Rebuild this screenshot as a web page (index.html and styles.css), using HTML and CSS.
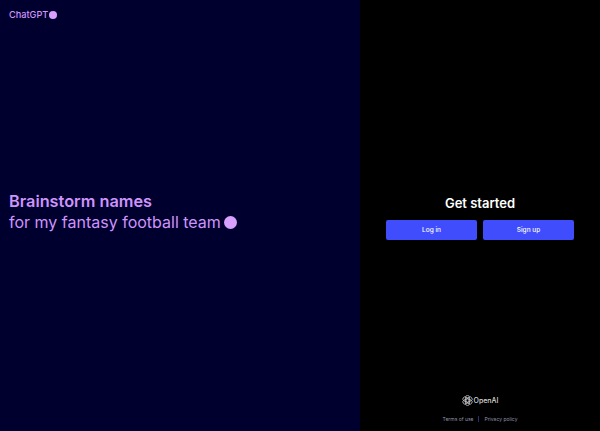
FILE: index.html
```html
<!DOCTYPE html>
<html lang="en">
<head>
    <meta charset="UTF-8">
    <title>ChatGPT</title>
    <link rel="stylesheet" href="styles.css">
</head>
<body>
    <div class="container">
        <div class="hero">
            <div class="brand">
                <span>ChatGPT</span>
                <span class="dot dot-small"></span>
            </div>
            <div class="prompt">
                <h2>Brainstorm names</h2>
                <p>for my fantasy football team <span class="dot dot-large"></span></p>
            </div>
        </div>
        <div class="auth">
            <div class="auth-body">
                <h1>Get started</h1>
                <div class="auth-buttons">
                    <button>Log in</button>
                    <button>Sign up</button>
                </div>
            </div>
            <div class="auth-footer">
                <div class="openai">
                    <svg width="11" height="11" viewBox="0 0 24 24" fill="none" stroke="currentColor" stroke-width="1.500">
                        <rect x="7.500" y="1" width="9" height="22" rx="4.500"/>
                        <rect x="7.500" y="1" width="9" height="22" rx="4.500" transform="rotate(60 12 12)"/>
                        <rect x="7.500" y="1" width="9" height="22" rx="4.500" transform="rotate(120 12 12)"/>
                        <path d="M12 8.500l3 1.750v3.500l-3 1.750-3-1.750v-3.500z"/>
                    </svg>
                    <span>OpenAI</span>
                </div>
                <div class="legal">
                    <a href="#">Terms of use</a>
                    <span class="sep"></span>
                    <a href="#">Privacy policy</a>
                </div>
            </div>
        </div>
    </div>
</body>
</html>
```

FILE: styles.css
```css
*{
    margin: 0;
    padding: 0;
    box-sizing: border-box;
}
body{
    font-family: Inter, "Liberation Sans", sans-serif;
    background: #000;
}
.container{
    width: 100vw;
    height: 100vh;
    display: flex;
}
.dot{
    display: inline-block;
    border-radius: 50%;
    background: #d8a0ff;
}

.hero{
    width: 60%;
    background: #00002e;
    color: #cf94fb;
    display: flex;
    flex-direction: column;
    padding: 9px 9px;
}
.brand{
    display: flex;
    align-items: center;
    gap: 1px;
    font-size: 9.200px;
    font-weight: 500;
    line-height: 12px;
}
.dot-small{
    width: 8px;
    height: 8px;
}
.prompt{
    margin-top: 170px;
}
.prompt h2{
    font-size: 16.300px;
    font-weight: 600;
    line-height: 20px;
}
.prompt p{
    font-size: 16px;
    line-height: 22px;
    display: flex;
    align-items: center;
    gap: 3px;
    white-space: nowrap;
}
.dot-large{
    width: 13px;
    height: 13px;
}

.auth{
    width: 40%;
    background: #000;
    color: #fff;
    display: flex;
    flex-direction: column;
    padding: 0 26px 8px;
}
.auth-body{
    flex: 1;
    padding-top: 194px;
}
.auth h1{
    font-size: 13px;
    font-weight: 600;
    line-height: 18px;
    text-align: center;
}
.auth-buttons{
    display: flex;
    gap: 6px;
    margin-top: 8px;
}
.auth-buttons button{
    flex: 1;
    height: 20px;
    background: #3f4dfc;
    color: #fff;
    border: none;
    border-radius: 2px;
    font-family: inherit;
    font-size: 6.500px;
    font-weight: 500;
}
.auth-footer{
    display: flex;
    flex-direction: column;
    align-items: center;
    gap: 9px;
}
.openai{
    display: flex;
    align-items: center;
    gap: 1px;
    font-size: 7px;
    font-weight: 500;
    color: #d8d8d8;
}
.legal{
    display: flex;
    align-items: center;
    gap: 5px;
    font-size: 5px;
    line-height: 8px;
}
.legal a{
    color: #8f93a8;
    text-decoration: none;
}
.sep{
    width: 1px;
    height: 6px;
    background: #2a2f70;
}
```
